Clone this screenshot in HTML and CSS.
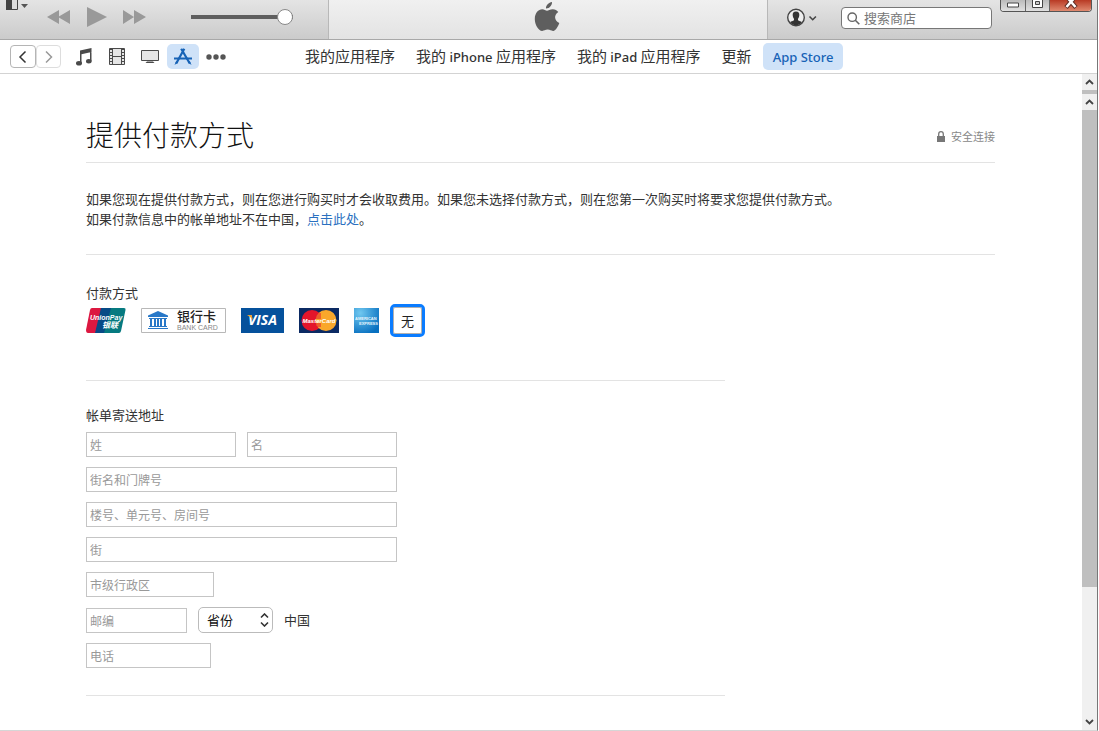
FILE: index.html
```html
<!DOCTYPE html>
<html lang="zh-CN">
<head>
    <meta charset="UTF-8">
    <meta name="viewport" content="width=device-width, initial-scale=1.0">
    <title>提供付款方式</title>
    <link rel="stylesheet" href="styles.css">
</head>
<body>
    <div class="window">
        <header class="toolbar">
            <div class="player">
                <button class="icon-button menu-button" aria-label="菜单">
                    <svg width="24" height="12" viewBox="0 0 24 12"><path d="M.5-1h11v10.500H.5z" fill="#ddd" stroke="#444"/><path d="M0-1h6v11H0z" fill="#444"/><path d="M15 4h7l-3.500 4z" fill="#555"/></svg>
                </button>
                <button class="icon-button" aria-label="上一首">
                    <svg width="24" height="20" viewBox="0 0 24 20"><path d="M1 10 13 3v14zM12 10l12-7v14z" fill="#999"/></svg>
                </button>
                <button class="icon-button" aria-label="播放">
                    <svg width="20" height="20" viewBox="0 0 20 20"><path d="M1 0l20 10L1 20z" fill="#999"/></svg>
                </button>
                <button class="icon-button" aria-label="下一首">
                    <svg width="24" height="20" viewBox="0 0 24 20"><path d="M1 3l11 7-11 7zM12 3l12 7-12 7z" fill="#999"/></svg>
                </button>
                <input class="volume" type="range" min="0" max="100" value="100" aria-label="音量">
            </div>

            <div class="display">
                <svg width="26" height="32" viewBox="0 0 26 32"><path d="M17 1c.3 3-2.400 6.600-6 6.500C10.700 4.500 13.800 1.300 17 1zM12 9.800c1.300 0 3-1.600 5.800-1.600 2.300 0 4.300 1 5.500 2.900-4.700 2.900-4 9 1 10.800-1 3.100-3.500 7.800-6.100 8-2 .1-2.900-1.300-5.500-1.300s-3.600 1.300-5.500 1.300C3.300 29.900-.2 23.300-.2 18.200c0-6.500 3.700-9.800 7.400-9.900 2.100 0 3.500 1.500 4.800 1.500z" fill="#5e5e5e"/></svg>
            </div>

            <div class="tools">
                <button class="icon-button account" aria-label="帐户">
                    <svg width="31" height="20" viewBox="0 0 31 20"><circle cx="9" cy="9.500" r="8.300" fill="#eee" stroke="#444" stroke-width="1.400"/><path d="M9 3.500c2.500 0 3.500 1.600 3.300 3.700-.2 2-.8 2.800-1.300 3.600v1.500c1 .8 3 .9 3.900 1.900-1.500 2-3.500 3-5.900 3s-4.400-1-5.900-3c.9-1 2.900-1.100 3.900-1.900v-1.500c-.5-.8-1.100-1.600-1.300-3.600C5.500 5.100 6.500 3.500 9 3.500z" fill="#333"/><path d="M22.500 8.500l3.200 3.200 3.200-3.200" fill="none" stroke="#444" stroke-width="1.600"/></svg>
                </button>
                <label class="search">
                    <svg width="13" height="13" viewBox="0 0 13 13"><circle cx="5.200" cy="5.200" r="4.200" fill="none" stroke="#666" stroke-width="1.400"/><path d="M8.300 8.300l4 4" stroke="#666" stroke-width="1.600"/></svg>
                    <input type="search" placeholder="搜索商店" aria-label="搜索商店">
                </label>
                <div class="window-buttons">
                    <button aria-label="最小化"><svg width="12" height="6" viewBox="0 0 12 6"><path d="M.5 1h11v4H.5z" fill="#fff" stroke="#444"/></svg></button>
                    <button aria-label="最大化"><svg width="11" height="9" viewBox="0 0 11 9"><path d="M.5-2h10v9.500H.5z" fill="#fff" stroke="#444"/><path d="M3.500 1.500h4v3h-4z" fill="#ccc" stroke="#444"/></svg></button>
                    <button class="close" aria-label="关闭"><svg width="14" height="10" viewBox="0 0 14 10"><path d="M2 7.500L9.500-1M4.500-1L12 7.500" stroke="#613027" stroke-width="4.500"/><path d="M2.500 7L9.500-1M4.500-1L11.500 7" stroke="#fff" stroke-width="2.500"/></svg></button>
                </div>
            </div>
        </header>

        <nav class="navbar">
            <div class="library">
                <div class="history">
                    <button aria-label="后退"><svg width="10" height="14" viewBox="0 0 10 14"><path d="M7.500 1.500L2 7l5.500 5.500" fill="none" stroke="#333" stroke-width="1.500"/></svg></button>
                    <button class="disabled" aria-label="前进"><svg width="10" height="14" viewBox="0 0 10 14"><path d="M2 1.500L7.500 7 2 12.500" fill="none" stroke="#999" stroke-width="1.500"/></svg></button>
                </div>
                <button class="icon-button media" aria-label="音乐">
                    <svg width="16" height="18" viewBox="0 0 16 18"><path d="M4 2.500L15.500 0v4L5.500 6.200V15H4zM14 3h1.500v10H14z" fill="#4a4a4a"/><ellipse cx="3" cy="15.300" rx="3" ry="2.300" fill="#4a4a4a"/><ellipse cx="12.800" cy="13.300" rx="2.800" ry="2.200" fill="#4a4a4a"/></svg>
                </button>
                <button class="icon-button media" aria-label="影片">
                    <svg width="16" height="18" viewBox="0 0 16 18"><path d="M.5.5h15v16H.5z" fill="#e5e5e5" stroke="#4a4a4a"/><path d="M3.500 0v17M12.500 0v17M3.500 8.500h9" stroke="#4a4a4a"/><path d="M2 1v16M14 1v16" stroke="#4a4a4a" stroke-width="2" stroke-dasharray="1 2"/></svg>
                </button>
                <button class="icon-button media" aria-label="电视节目">
                    <svg width="18" height="14" viewBox="0 0 18 14"><path d="M.5.5h17v10H.5z" fill="#e5e5e5" stroke="#4a4a4a"/><path d="M6 11.500h6l1.500 1.500h-9z" fill="#4a4a4a"/></svg>
                </button>
                <button class="icon-button media selected" aria-label="应用程序">
                    <svg width="20" height="18" viewBox="0 0 20 18"><path d="M11.300.8L3.200 15.500M8.200.8l8.600 14.700" stroke="#1763b6" stroke-width="2.200"/><path d="M1 10.500h18" stroke="#1763b6" stroke-width="2"/><path d="M3.200 13L1.500 17l3.700-2.500zM16.800 13l1.700 4-3.700-2.500z" fill="#1763b6"/></svg>
                </button>
                <button class="icon-button media" aria-label="更多">
                    <svg width="20" height="6" viewBox="0 0 20 6"><circle cx="3" cy="3" r="2.700" fill="#555"/><circle cx="10" cy="3" r="2.700" fill="#555"/><circle cx="17" cy="3" r="2.700" fill="#555"/></svg>
                </button>
            </div>
            <div class="tabs">
                <a href="#">我的应用程序</a>
                <a href="#">我的 <span>iPhone</span> 应用程序</a>
                <a href="#">我的 <span>iPad</span> 应用程序</a>
                <a href="#">更新</a>
                <a class="current" href="#"><span>App Store</span></a>
            </div>
        </nav>

        <div class="body">
            <main class="content">
                <div class="heading">
                    <h1>提供付款方式</h1>
                    <div class="secure">
                        <svg width="8" height="11" viewBox="0 0 8 11"><path d="M0 5h8v6H0z" fill="#777"/><path d="M1.700 5V3a2.300 2.300 0 0 1 4.600 0v2" fill="none" stroke="#777" stroke-width="1.300"/></svg>
                        安全连接
                    </div>
                </div>

                <div class="intro">
                    <p>如果您现在提供付款方式，则在您进行购买时才会收取费用。如果您未选择付款方式，则在您第一次购买时将要求您提供付款方式。</p>
                    <p>如果付款信息中的帐单地址不在中国，<a href="#">点击此处</a>。</p>
                </div>

                <form>
                    <section class="payment">
                        <h2>付款方式</h2>
                        <div class="cards">
                            <button type="button" class="card" aria-label="UnionPay 银联">
                                <svg width="40" height="25" viewBox="0 0 40 25">
                                    <path d="M6 0h12l-6 25H2Q0 25 0 22L4 2Q4.500 0 6 0z" fill="#dc1840"/>
                                    <path d="M15 0h12l-6 25H9Z" fill="#074a86"/>
                                    <path d="M25 0h13q2 0 1.500 2L35 23q-.5 2-2 2H18z" fill="#067a80"/>
                                    <text class="unionpay" x="4" y="12">UnionPay</text>
                                    <text class="yinlian" x="16" y="20">银联</text>
                                </svg>
                            </button>
                            <button type="button" class="card" aria-label="银行卡">
                                <svg width="85" height="25" viewBox="0 0 85 25">
                                    <path d="M.5.5h84v24H.5z" fill="#fff" stroke="#b8b8b8"/>
                                    <path d="M7 7.500L17 3l10 4.500V9H7zM8 10h18v1H8zM9 11h2v7H9zM13 11h2v7h-2zM16 11h2v7h-2zM19 11h2v7h-2zM23 11h2v7h-2zM8 18h18v1H8zM7 20h20v1H7z" fill="#2878c8"/>
                                    <text class="bank-name" x="36" y="13">银行卡</text>
                                    <text class="bank-sub" x="36" y="22">BANK CARD</text>
                                </svg>
                            </button>
                            <button type="button" class="card" aria-label="VISA">
                                <svg width="43" height="25" viewBox="0 0 43 25">
                                    <path d="M0 0h43v25H0z" fill="#05519c"/>
                                    <text class="visa" x="7" y="17">VISA</text>
                                    <path d="M6 7h4.500l1.500 5q-2-3-6-5z" fill="#f2a52b"/>
                                </svg>
                            </button>
                            <button type="button" class="card" aria-label="MasterCard">
                                <svg width="40" height="25" viewBox="0 0 40 25">
                                    <path d="M0 0h40v25H0z" fill="#0b2a63"/>
                                    <circle cx="13" cy="12.500" r="10.500" fill="#e4152b"/>
                                    <circle cx="27" cy="12.500" r="10.500" fill="#f9a72b"/>
                                    <path d="M18 6h4M17 8h5M17 10h5M17 16h5M18 18h4" stroke="#e4152b"/>
                                    <text class="mastercard" x="20" y="15">MasterCard</text>
                                </svg>
                            </button>
                            <button type="button" class="card" aria-label="American Express">
                                <svg width="25" height="25" viewBox="0 0 25 25">
                                    <defs><radialGradient id="amex" cx=".25" cy=".2" r=".9"><stop offset="0" stop-color="#70c8f0"/><stop offset="1" stop-color="#0870c0"/></radialGradient></defs>
                                    <path d="M0 0h25v25H0z" fill="url(#amex)"/>
                                    <text class="amex" x="1" y="12">AMERICAN</text>
                                    <text class="amex" x="5" y="17">EXPRESS</text>
                                </svg>
                            </button>
                            <button type="button" class="card none">无</button>
                        </div>
                    </section>

                    <section class="billing">
                        <h2>帐单寄送地址</h2>
                        <div class="row">
                            <input class="name" type="text" placeholder="姓" aria-label="姓">
                            <input class="name" type="text" placeholder="名" aria-label="名">
                        </div>
                        <div class="row"><input class="street" type="text" placeholder="街名和门牌号" aria-label="街名和门牌号"></div>
                        <div class="row"><input class="street" type="text" placeholder="楼号、单元号、房间号" aria-label="楼号、单元号、房间号"></div>
                        <div class="row"><input class="street" type="text" placeholder="街" aria-label="街"></div>
                        <div class="row"><input class="city" type="text" placeholder="市级行政区" aria-label="市级行政区"></div>
                        <div class="row">
                            <input class="postcode" type="text" placeholder="邮编" aria-label="邮编">
                            <div class="select">
                                <select aria-label="省份"><option>省份</option></select>
                                <svg width="9" height="14" viewBox="0 0 9 14"><path d="M1 4.500L4.500 1 8 4.500M1 9.500L4.500 13 8 9.500" fill="none" stroke="#333" stroke-width="1.600"/></svg>
                            </div>
                            <span>中国</span>
                        </div>
                        <div class="row"><input class="phone" type="tel" placeholder="电话" aria-label="电话"></div>
                    </section>
                </form>
            </main>

            <div class="scrollbar">
                <div class="arrow"><svg width="9" height="6" viewBox="0 0 9 6"><path d="M1 5l3.500-3.500L8 5" fill="none" stroke="#444" stroke-width="1.800"/></svg></div>
                <div class="stub"></div>
                <div class="arrow"><svg width="9" height="6" viewBox="0 0 9 6"><path d="M1 5l3.500-3.500L8 5" fill="none" stroke="#444" stroke-width="1.800"/></svg></div>
                <div class="track"><div class="thumb"></div></div>
                <div class="arrow"><svg width="9" height="6" viewBox="0 0 9 6"><path d="M1 1l3.500 3.500L8 1" fill="none" stroke="#444" stroke-width="1.800"/></svg></div>
            </div>
        </div>
    </div>
</body>
</html>
```
FILE: styles.css
```css
* {
    box-sizing: border-box;
}
body {
    margin: 0;
    background-color: #fff;
    color: #333;
    font-family: "Noto Sans CJK SC", sans-serif;
    font-size: 13px;
    line-height: 20px;
}
h1, h2, p {
    margin: 0;
    font-weight: normal;
}
svg {
    display: block;
    flex: none;
}
button, input, select {
    font-family: inherit;
    margin: 0;
}
.window {
    display: flex;
    flex-direction: column;
    height: 100vh;
    margin-right: 1px;
    border-right: 1px solid #777;
    border-bottom: 1px solid #d6d6d6;
}
.icon-button {
    display: flex;
    align-items: center;
    justify-content: center;
    padding: 0;
    border: none;
    background: none;
}

/* toolbar */
.toolbar {
    display: flex;
    flex: none;
    height: 40px;
    border-bottom: 1px solid #a8a8a8;
    background-image: linear-gradient(#e4e4e4, #cbcbcb);
}
.player {
    display: flex;
    align-items: center;
    width: 328px;
    padding: 0 35px 5px 6px;
    gap: 16px;
}
.player svg {
    overflow: visible;
}
.menu-button {
    align-self: flex-start;
}
.volume {
    appearance: none;
    width: 102px;
    height: 16px;
    margin-left: auto;
    background: linear-gradient(#5f5f5f, #5f5f5f) center / 100% 4px no-repeat;
}
.volume::-webkit-slider-thumb {
    appearance: none;
    width: 16px;
    height: 16px;
    border: 1px solid #888;
    border-radius: 50%;
    background-color: #fff;
}
.display {
    display: flex;
    flex: 1;
    justify-content: center;
    padding-top: 1px;
    border: 1px solid #b8b8b8;
    border-width: 0 1px;
    background-image: linear-gradient(#f0f0f0, #e3e3e3);
}
.display svg {
    overflow: visible;
}
.tools {
    display: flex;
    width: 329px;
    padding: 0 5px 0 19px;
}
.account {
    height: 35px;
}
.search {
    display: flex;
    align-items: center;
    width: 151px;
    height: 22px;
    margin: 7px 8px 0 23px;
    padding: 0 5px;
    gap: 4px;
    border: 1px solid #777;
    border-radius: 4px;
    background-color: #fff;
}
.search input {
    width: 100%;
    padding: 0;
    border: none;
    outline: none;
    font-size: 13px;
    line-height: 18px;
}
.search input::placeholder {
    color: #777;
}
.window-buttons {
    display: flex;
    height: 12px;
    flex: 1;
    border: 1px solid #555;
    border-top: none;
    border-radius: 0 0 4px 4px;
    overflow: hidden;
}
.window-buttons button {
    display: flex;
    flex: 1;
    align-items: flex-start;
    justify-content: center;
    padding: 0;
    border: none;
    border-right: 1px solid #666;
    background-image: linear-gradient(#bbb, #e0e0e0);
}
.window-buttons button:first-child {
    padding-top: 2px;
}
.window-buttons .close {
    flex: none;
    width: 41px;
    border: none;
    background-image: linear-gradient(#b83a24, #e08a70);
}

/* navigation */
.navbar {
    display: flex;
    flex: none;
    align-items: center;
    height: 34px;
    padding-left: 10px;
    border-bottom: 1px solid #d3d3d3;
}
.library {
    display: flex;
    align-items: center;
    width: 285px;
}
.history {
    display: flex;
    margin-right: 7px;
}
.history button {
    display: flex;
    align-items: center;
    justify-content: center;
    width: 26px;
    height: 23px;
    padding: 0;
    border: 1px solid #b5b5b5;
    border-radius: 4px;
    background-color: #fff;
}
.history .disabled {
    width: 25px;
    border-color: #ddd;
}
.media {
    width: 32px;
    height: 25px;
    margin-right: 1px;
    border-radius: 5px;
}
.selected, .tabs .current {
    background-color: #cfe2f8;
}
.tabs {
    display: flex;
    gap: 1px;
}
.tabs a {
    padding: 0 10px;
    border-radius: 5px;
    color: #333;
    font-size: 15px;
    line-height: 25px;
    text-decoration: none;
    white-space: nowrap;
}
.tabs span {
    font-family: "Noto Sans", sans-serif;
    font-size: 13px;
    font-weight: 500;
}
.tabs .current {
    color: #1763b6;
}

/* page */
.body {
    display: flex;
    flex: 1;
    min-height: 0;
}
.content {
    flex: 1;
    padding: 40px 87px 0 86px;
    overflow: hidden;
}
.heading {
    display: flex;
    align-items: center;
    justify-content: space-between;
    height: 49px;
    padding-bottom: 8px;
    border-bottom: 1px solid #e3e3e3;
}
h1 {
    color: #111;
    font-size: 28px;
    font-weight: 300;
    line-height: 40px;
}
.secure {
    display: flex;
    align-items: center;
    gap: 6px;
    padding-top: 4px;
    color: #888;
    font-size: 11px;
}
.intro {
    padding: 26px 0 25px;
    border-bottom: 1px solid #e3e3e3;
}
.intro a {
    color: #2a70c0;
    text-decoration: none;
}
form {
    max-width: 639px;
}
h2 {
    font-size: 13px;
}
.payment {
    padding: 28px 0 42px;
    border-bottom: 1px solid #e3e3e3;
}
.cards {
    display: flex;
    align-items: center;
    height: 35px;
    gap: 15px;
}
.card {
    padding: 0;
    border: none;
    background: none;
}
.card.none {
    width: 29px;
    height: 27px;
    margin-left: -1px;
    border: 1px solid #b0b0b0;
    outline: 3px solid #0a7cff;
    border-radius: 2px;
    background-color: #fff;
    color: #222;
    font-size: 13px;
    line-height: 20px;
}
.unionpay {
    fill: #fff;
    font: italic bold 7px "Liberation Sans", sans-serif;
}
.yinlian {
    fill: #fff;
    font: italic bold 8px "Noto Sans CJK SC", sans-serif;
}
.bank-name {
    fill: #222;
    font: 500 13px "Noto Sans CJK SC", sans-serif;
}
.bank-sub {
    fill: #888;
    font: 7px "Liberation Sans", sans-serif;
}
.visa {
    fill: #fff;
    font: italic bold 14px "Open Sans", sans-serif;
}
.mastercard {
    fill: #fff;
    font: italic bold 6px "Liberation Sans", sans-serif;
    text-anchor: middle;
}
.amex {
    fill: #e6f5fd;
    font: bold 4px "Liberation Sans", sans-serif;
}

/* billing address */
.billing {
    padding: 24px 0 27px;
    border-bottom: 1px solid #e3e3e3;
}
.billing h2 {
    margin-bottom: 7px;
}
.row {
    display: flex;
    align-items: center;
    gap: 11px;
    margin-bottom: 10px;
}
.row:last-child {
    margin-bottom: 0;
}
.row input {
    height: 25px;
    padding: 0 3px;
    border: 1px solid #c5c5c5;
    font-size: 12px;
    line-height: 18px;
}
.row input::placeholder {
    color: #999;
}
.name {
    width: 150px;
}
.street {
    width: 311px;
}
.city {
    width: 128px;
}
.postcode {
    width: 101px;
}
.phone {
    width: 125px;
}
.select {
    display: grid;
    align-items: center;
}
.select select, .select svg {
    grid-area: 1 / 1;
}
.select select {
    appearance: none;
    width: 75px;
    height: 26px;
    padding: 0 8px 2px;
    border: 1px solid #bbb;
    border-radius: 5px;
    background-color: #fff;
    color: #111;
    font-size: 13px;
}
.select svg {
    justify-self: end;
    margin-right: 4px;
    pointer-events: none;
}

/* scrollbar */
.scrollbar {
    display: flex;
    flex-direction: column;
    width: 15px;
    background-color: #f0f0f0;
}
.arrow {
    display: flex;
    align-items: center;
    justify-content: center;
    height: 16px;
}
.stub {
    height: 4px;
    background-color: #bfbfbf;
}
.track {
    flex: 1;
}
.thumb {
    height: 79%;
    background-color: #bfbfbf;
}
```
